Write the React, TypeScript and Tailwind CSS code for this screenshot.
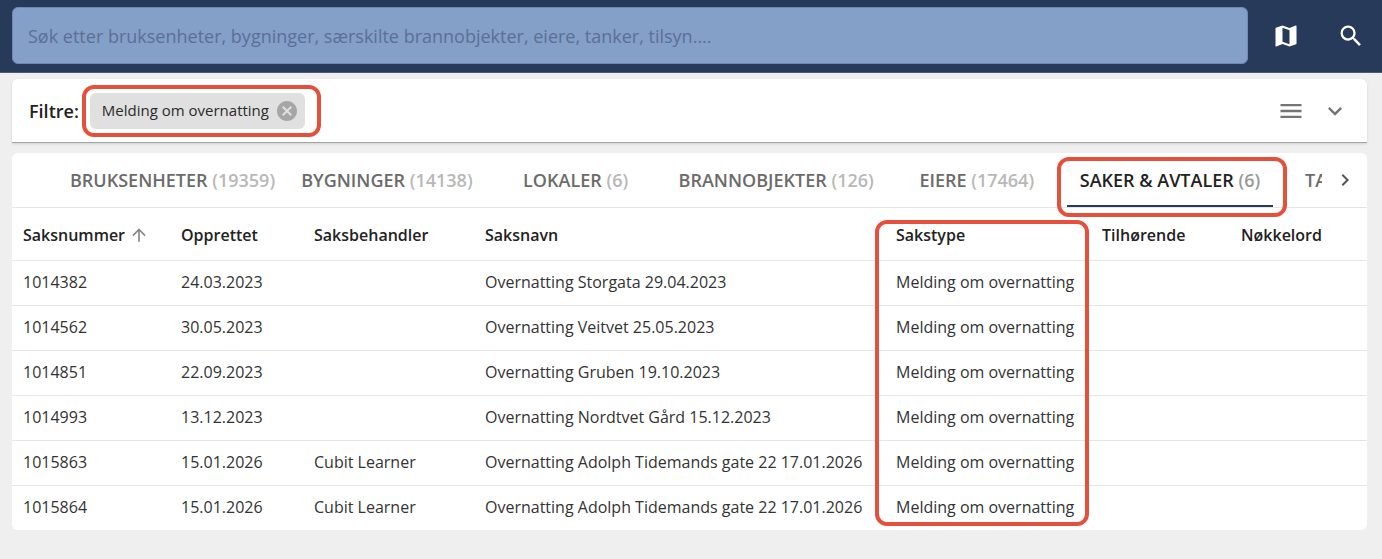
import { useState } from "react";
import {
  MdArrowUpward,
  MdCancel,
  MdExpandMore,
  MdChevronRight,
  MdMap,
  MdMenu,
  MdSearch,
} from "react-icons/md";

const tabs = [
  { name: "BRUKSENHETER", count: 19359 },
  { name: "BYGNINGER", count: 14138 },
  { name: "LOKALER", count: 6 },
  { name: "BRANNOBJEKTER", count: 126 },
  { name: "EIERE", count: 17464 },
  { name: "SAKER & AVTALER", count: 6, marked: true },
  { name: "TANKER", count: 240 },
];

const columns = [
  { name: "Saksnummer", width: "w-[158px]", sorted: true },
  { name: "Opprettet", width: "w-[133px]" },
  { name: "Saksbehandler", width: "w-[171px]" },
  { name: "Saksnavn", width: "w-[411px]" },
  { name: "Sakstype", width: "w-[206px]", marked: true },
  { name: "Tilhørende", width: "w-[139px]" },
  { name: "Nøkkelord", width: "w-[137px]" },
];

const rows = [
  ["1014382", "24.03.2023", "", "Overnatting Storgata 29.04.2023"],
  ["1014562", "30.05.2023", "", "Overnatting Veitvet 25.05.2023"],
  ["1014851", "22.09.2023", "", "Overnatting Gruben 19.10.2023"],
  ["1014993", "13.12.2023", "", "Overnatting Nordtvet Gård 15.12.2023"],
  ["1015863", "15.01.2026", "Cubit Learner", "Overnatting Adolph Tidemands gate 22 17.01.2026"],
  ["1015864", "15.01.2026", "Cubit Learner", "Overnatting Adolph Tidemands gate 22 17.01.2026"],
];

// Red frame that lies over the part it points out
function Marker({ className }: { className: string }) {
  return (
    <span
      aria-hidden="true"
      className={`absolute z-10 rounded-xl border-4 border-[#e5503c] pointer-events-none ${className}`}
    />
  );
}

function TopBar() {
  return (
    <header className="flex items-center bg-[#283a5a] border-b border-[#4b5a75] pl-3 pr-[17px] pt-[7px] pb-2">
      <input
        type="search"
        aria-label="Søk"
        placeholder="Søk etter bruksenheter, bygninger, særskilte brannobjekter, eiere, tanker, tilsyn...."
        className="flex-1 min-w-0 h-[57px] px-[15px] rounded-md bg-[#849fc8] border border-[#7189b2] text-lg text-[#283a5a] placeholder:text-[#5b7095] outline-none"
      />
      <button aria-label="Kart" className="ml-6 text-white">
        <MdMap size={28} />
      </button>
      <button aria-label="Søk" className="ml-[37px] text-white">
        <MdSearch size={28} />
      </button>
    </header>
  );
}

function FilterBar() {
  return (
    <section className="flex items-center h-16 pl-[17px] pr-[18px] bg-white rounded-t-md border-b border-[#a5a5a5] shadow-sm">
      <h2 className="text-lg font-semibold text-[#222]">Filtre:</h2>
      <div className="relative ml-[11px] flex items-center gap-1.5 h-9 pl-3 pr-1.5 rounded-md bg-[#e0e0e0]">
        <span className="text-[15px] text-[#2b2b2b]">Melding om overnatting</span>
        <button aria-label="Fjern filter" className="text-[#a6a6a6]">
          <MdCancel size={24} />
        </button>
        <Marker className="-top-2 -bottom-2 -left-2 -right-4" />
      </div>
      <button aria-label="Meny" className="ml-auto text-[#757575]">
        <MdMenu size={28} />
      </button>
      <button aria-label="Vis mer" className="ml-4 text-[#757575]">
        <MdExpandMore size={28} />
      </button>
    </section>
  );
}

function Tabs() {
  const [active, setActive] = useState("SAKER & AVTALER");
  return (
    <div className="flex h-[55px] border-b border-[#e6e6e6]">
      <div role="tablist" className="flex flex-1 min-w-0 ml-[45px] overflow-x-clip">
        {tabs.map((tab) => (
          <button
            key={tab.name}
            role="tab"
            aria-selected={tab.name === active}
            onClick={() => setActive(tab.name)}
            className={`relative shrink-0 min-w-[180px] px-[13px] pt-0.5 border-b-2 text-lg font-semibold whitespace-nowrap ${
              tab.name === active
                ? "border-[#283a5a] text-[#222]"
                : "border-transparent text-[#6b6b6b]"
            }`}
          >
            {tab.name}{" "}
            <span className={tab.name === active ? "text-[#999]" : "text-[#b8b8b8]"}>
              ({tab.count})
            </span>
            {tab.marked && <Marker className="top-1 -bottom-3 -left-2.5 -right-3.5" />}
          </button>
        ))}
      </div>
      <button aria-label="Neste faner" className="w-[45px] flex items-center justify-center text-[#555]">
        <MdChevronRight size={24} />
      </button>
    </div>
  );
}

function CaseTable() {
  return (
    <table className="w-full table-fixed text-base text-[#333] text-left">
      <thead>
        <tr className="h-[52px]">
          {columns.map((col) => (
            <th
              key={col.name}
              scope="col"
              className={`relative pl-[11px] pt-0.5 font-semibold text-[#222] whitespace-nowrap ${col.width}`}
            >
              <span className="inline-flex items-center gap-1">
                {col.name}
                {col.sorted && <MdArrowUpward size={20} className="text-[#888]" />}
              </span>
              {col.marked && <Marker className="top-3 -left-2.5 right-0.5 h-[306px]" />}
            </th>
          ))}
        </tr>
      </thead>
      <tbody>
        {rows.map(([id, created, handler, name]) => (
          <tr key={id} className="h-[45px] border-t border-[#e6e6e6] whitespace-nowrap">
            <td className="pl-[11px] pb-0.5">{id}</td>
            <td className="pl-[11px] pb-0.5">{created}</td>
            <td className="pl-[11px] pb-0.5">{handler}</td>
            <td className="pl-[11px] pb-0.5">{name}</td>
            <td className="pl-[11px] pb-0.5">Melding om overnatting</td>
            <td />
            <td />
          </tr>
        ))}
      </tbody>
    </table>
  );
}

export default function App() {
  return (
    <div className="min-h-screen bg-[#efefef] font-['Open_Sans',sans-serif]">
      <TopBar />
      <main className="flex flex-col gap-2.5 pl-3 pr-[15px] pt-1.5 pb-7">
        <FilterBar />
        <section className="bg-white rounded-md">
          <Tabs />
          <CaseTable />
        </section>
      </main>
    </div>
  );
}
